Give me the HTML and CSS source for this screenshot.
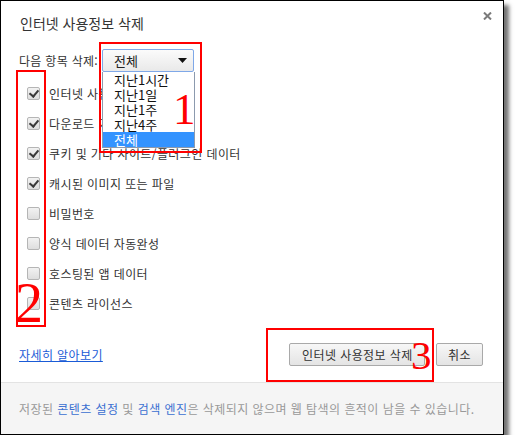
FILE: index.html
```html
<!DOCTYPE html>
<html lang="ko">
<head>
<meta charset="utf-8">
<link rel="stylesheet" href="styles.css">
</head>
<body>
<div class="dialog">
  <div class="head">
    <h1 class="title">인터넷 사용정보 삭제</h1>
    <svg class="close" width="9" height="8" viewBox="0 0 9 8"><path d="M1 0.5 L8 7.5 M8 0.5 L1 7.5" stroke="#7a7a7a" stroke-width="2"/></svg>
  </div>
  <div class="period">
    <span class="period-label">다음 항목 삭제:</span>
    <div class="select">
      <span>전체</span>
      <svg class="arrow" width="9" height="5" viewBox="0 0 9 5"><path d="M0 0 H9 L4.5 5 Z" fill="#111"/></svg>
    </div>
  </div>
  <ul class="items">
    <li><span class="cb on"></span>인터넷 사용 기록</li>
    <li><span class="cb on"></span>다운로드 기록</li>
    <li><span class="cb on"></span>쿠키 및 기타 사이트/플러그인 데이터</li>
    <li><span class="cb on"></span>캐시된 이미지 또는 파일</li>
    <li><span class="cb"></span>비밀번호</li>
    <li><span class="cb"></span>양식 데이터 자동완성</li>
    <li><span class="cb"></span>호스팅된 앱 데이터</li>
    <li><span class="cb"></span>콘텐츠 라이선스</li>
  </ul>
  <div class="actions">
    <a class="more" href="#">자세히 알아보기</a>
    <div class="buttons">
      <button class="btn btn-main">인터넷 사용정보 삭제</button>
      <button class="btn">취소</button>
    </div>
  </div>
  <p class="foot">저장된 <a href="#">콘텐츠 설정</a> 및 <a href="#">검색 엔진</a>은 삭제되지 않으며 웹 탐색의 흔적이 남을 수 있습니다.</p>

  <ul class="dropdown">
    <li>지난1시간</li>
    <li>지난1일</li>
    <li>지난1주</li>
    <li>지난4주</li>
    <li class="sel">전체</li>
  </ul>

  <div class="mark mark1"></div>
  <div class="mark mark2"></div>
  <div class="mark mark3"></div>
  <span class="num num1">1</span>
  <span class="num num2">2</span>
  <span class="num num3">3</span>
</div>
</body>
</html>
```

FILE: styles.css
```css
* { box-sizing: border-box; }
body {
  margin: 0;
  background: #fff;
  font-family: "Noto Sans CJK KR", "Noto Sans", sans-serif;
  font-size: 12px;
  color: #333;
}
.dialog {
  position: relative;
  width: 504px;
  height: 435px;
  border: 1px solid #000;
  background: #fff;
  box-shadow: 5px 5px 4px rgba(0,0,0,0.55);
  display: flex;
  flex-direction: column;
}
.head {
  height: 48px;
  display: flex;
  justify-content: space-between;
  align-items: flex-start;
  padding: 12px 11px 0 19px;
}
.title {
  margin: 0;
  font-size: 14px;
  font-weight: normal;
  line-height: 20px;
  color: #333;
}
.close { margin-top: -1px; }
.period {
  display: flex;
  align-items: center;
  padding-left: 18px;
  height: 23px;
}
.period-label { width: 83px; line-height: 23px; letter-spacing: 0.3px; }
.select {
  width: 92px;
  height: 23px;
  border: 1px solid #7fa8e8;
  border-radius: 2px;
  background: linear-gradient(#fbfbfb, #e9e9e9);
  display: flex;
  align-items: center;
  justify-content: space-between;
  padding: 0 6px 0 11px;
  font-size: 13px;
  color: #222;
}
.items {
  list-style: none;
  margin: 6px 0 0;
  padding: 0 0 0 26px;
}
.items li {
  height: 30px;
  display: flex;
  align-items: center;
  font-size: 12px;
  letter-spacing: 0.4px;
  color: #333;
}
.cb {
  width: 13px;
  height: 13px;
  border: 1px solid #b5b5b5;
  border-radius: 2px;
  background: linear-gradient(#f2f2f2, #dedede);
  margin-right: 9px;
  position: relative;
}
.cb.on::after {
  content: "";
  position: absolute;
  left: 3px;
  top: 0px;
  width: 4px;
  height: 7px;
  border-right: 2px solid #3a3a3a;
  border-bottom: 2px solid #3a3a3a;
  transform: rotate(40deg);
}
.actions {
  margin-top: 25px;
  height: 23px;
  display: flex;
  align-items: center;
  justify-content: space-between;
  padding: 0 20px 0 18px;
}
.more {
  color: #1a5bd6;
  text-decoration: underline;
  font-size: 12px;
  letter-spacing: 0.4px;
}
.buttons { display: flex; gap: 11px; }
.btn {
  height: 23px;
  border: 1px solid #a9a9a9;
  border-radius: 2px;
  background: linear-gradient(#f7f7f7, #e4e4e4);
  font-family: inherit;
  font-size: 12px;
  letter-spacing: 0.4px;
  color: #333;
  padding: 0 11px;
  white-space: nowrap;
}
.btn-main { width: 136px; text-align: left; padding: 0 0 0 12px; }
.foot {
  margin: auto 0 0;
  height: 52px;
  line-height: 51px;
  border-top: 1px solid #e3e3e3;
  background: #f5f5f5;
  color: #999;
  font-size: 12px;
  letter-spacing: 0.45px;
  padding: 0 0 0 18px;
  white-space: nowrap;
}
.foot a { color: #3b6fd1; text-decoration: none; }

.dropdown {
  position: absolute;
  left: 101px;
  top: 71px;
  width: 93px;
  margin: 0;
  padding: 0;
  list-style: none;
  background: #fff;
  border: 1px solid #8c9aae;
  border-top: none;
  font-size: 13px;
  color: #111;
}
.dropdown li {
  height: 15px;
  line-height: 15px;
  padding-left: 11px;
}
.dropdown li.sel { background: #3393ff; color: #fff; }

.mark {
  position: absolute;
  border: 2px solid #f00;
}
.mark1 { left: 98px; top: 41px; width: 103px; height: 111px; }
.mark2 { left: 15px; top: 69px; width: 30px; height: 257px; }
.mark3 { left: 265px; top: 327px; width: 168px; height: 54px; }
.num {
  position: absolute;
  font-family: "Liberation Serif", serif;
  color: #f00;
  line-height: 1;
}
.num1 { left: 172px; top: 86px; font-size: 45px; }
.num2 { left: 14px; top: 274px; font-size: 56px; }
.num3 { left: 410px; top: 334px; font-size: 41px; }
```
